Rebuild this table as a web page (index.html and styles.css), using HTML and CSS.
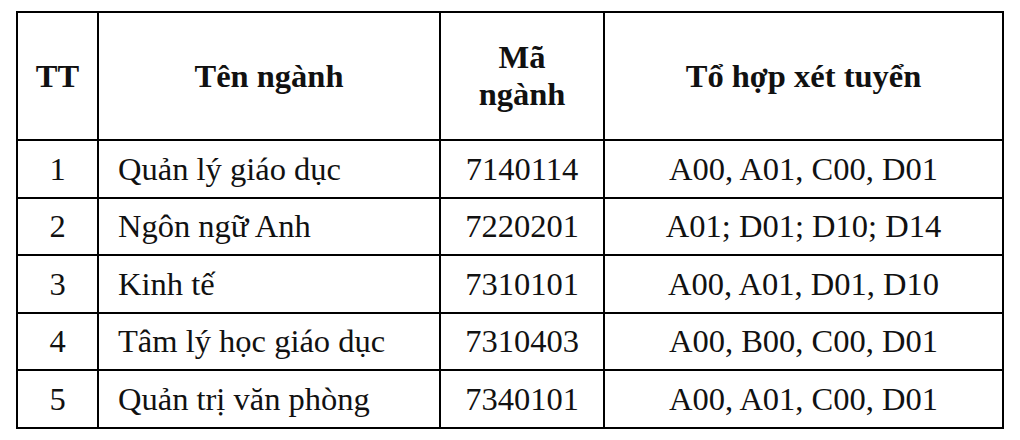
FILE: index.html
```html
<!DOCTYPE html>
<html lang="vi">
<head>
<meta charset="utf-8">
<link rel="stylesheet" href="styles.css">
</head>
<body>
<table class="majors">
  <colgroup>
    <col class="c-tt">
    <col class="c-name">
    <col class="c-code">
    <col class="c-combo">
  </colgroup>
  <thead>
    <tr>
      <th>TT</th>
      <th>Tên ngành</th>
      <th>Mã<br>ngành</th>
      <th>Tổ hợp xét tuyển</th>
    </tr>
  </thead>
  <tbody>
    <tr><td>1</td><td class="name">Quản lý giáo dục</td><td>7140114</td><td>A00, A01, C00, D01</td></tr>
    <tr><td>2</td><td class="name">Ngôn ngữ Anh</td><td>7220201</td><td>A01; D01; D10; D14</td></tr>
    <tr><td>3</td><td class="name">Kinh tế</td><td>7310101</td><td>A00, A01, D01, D10</td></tr>
    <tr><td>4</td><td class="name">Tâm lý học giáo dục</td><td>7310403</td><td>A00, B00, C00, D01</td></tr>
    <tr><td>5</td><td class="name">Quản trị văn phòng</td><td>7340101</td><td>A00, A01, C00, D01</td></tr>
  </tbody>
</table>
</body>
</html>
```
FILE: styles.css
```css
html, body {
  margin: 0;
  padding: 0;
  background: #fff;
}
body {
  padding: 11px 0 0 16px;
  color: #111;
}
.majors {
  border-collapse: collapse;
  table-layout: fixed;
  width: 986px;
  font-family: "Liberation Serif", Tinos, "Times New Roman", serif;
  font-size: 32.5px;
}
.majors th,
.majors td {
  border: 2px solid #000;
  text-align: center;
  vertical-align: middle;
  padding: 0;
}
.c-tt { width: 81px; }
.c-name { width: 342px; }
.c-code { width: 164px; }
.c-combo { width: 399px; }
.majors th {
  height: 126px;
  font-weight: bold;
  line-height: 37px;
}
.majors td {
  height: 55.5px;
  line-height: 36px;
}
.majors td.name {
  text-align: left;
  padding-left: 19px;
}
```
